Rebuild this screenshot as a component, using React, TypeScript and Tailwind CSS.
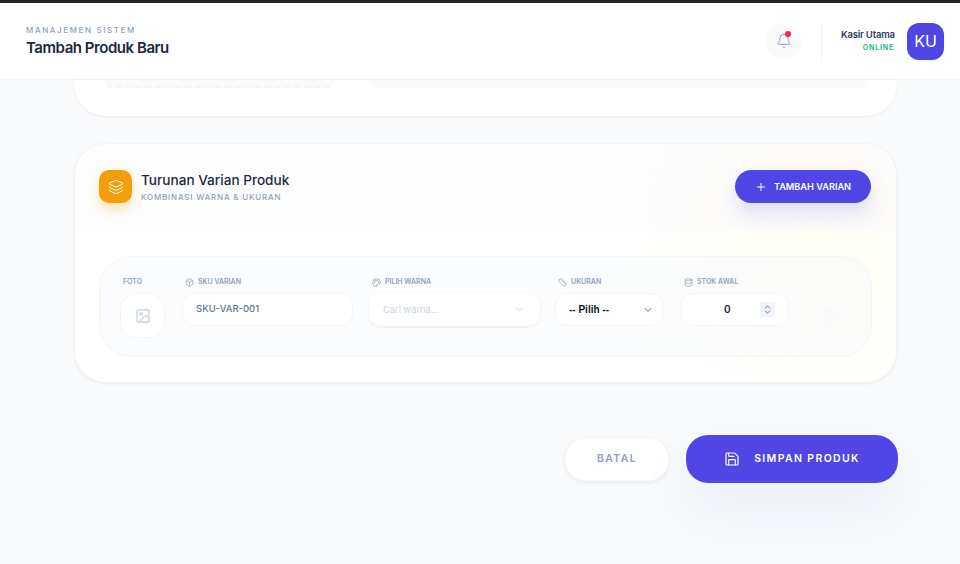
import { Bell, Box, ChevronDown, ChevronsUpDown, Database, Image, Layers, Palette, Plus, Ruler, Save, Trash2 } from 'lucide-react';

function FieldLabel({ icon, text }: { icon?: React.ReactNode; text: string }) {
  return (
    <div className="mb-[5px] flex h-[11px] items-center gap-[4px] text-[7px] font-semibold uppercase text-slate-400">
      {icon}
      <span>{text}</span>
    </div>
  );
}

export default function App() {
  return (
    <div className="flex h-[564px] w-[960px] flex-col overflow-hidden bg-[#f8fafc] font-['Inter',sans-serif]">
      <div className="h-[3px] bg-[#1f2228]" />
      <header className="flex h-[77px] shrink-0 items-center justify-between border-b border-slate-100 bg-white pl-[26px] pr-[16px]">
        <div>
          <p className="text-[8px] font-medium uppercase leading-[11px] tracking-[0.2em] text-slate-400">Manajemen Sistem</p>
          <h1 className="mt-[2px] text-[15px] font-semibold leading-[20px] tracking-[-0.03em] text-slate-800">Tambah Produk Baru</h1>
        </div>
        <div className="flex items-center">
          <div className="relative flex h-[35px] w-[35px] items-center justify-center rounded-2xl bg-slate-50 text-slate-400">
            <Bell size={16} strokeWidth={1.5} />
            <span className="absolute right-[10px] top-[7px] h-[6px] w-[6px] rounded-full bg-rose-500" />
          </div>
          <div className="ml-[20px] h-[38px] w-px bg-slate-100" />
          <div className="ml-[19px] w-[53px] text-right">
            <p className="-mt-px whitespace-nowrap text-[9.5px] font-semibold leading-[14px] tracking-[-0.02em] text-slate-700">Kasir Utama</p>
            <p className="text-[7px] font-semibold leading-[11px] tracking-[0.12em] text-emerald-500">ONLINE</p>
          </div>
          <div className="ml-[13px] flex h-[37px] w-[37px] items-center justify-center rounded-xl bg-[#4f46e5] text-[16px] text-white">KU</div>
        </div>
      </header>

      <main className="flex min-h-0 flex-1 flex-col pl-[74px] pr-[63px]">
        <section className="flex h-[36px] shrink-0 gap-[35px] rounded-b-[32px] bg-white px-[31px] shadow-[0_1px_3px_rgba(15,23,42,0.06)]">
          <div className="h-[8px] w-[230px] rounded-b-[20px] border-b-2 border-dashed border-slate-100 bg-slate-50" />
          <div className="h-[8px] flex-1 rounded-b-[20px] bg-slate-50" />
        </section>

        <section className="relative mt-[27px] h-[240px] shrink-0 overflow-hidden rounded-[32px] border border-slate-100 bg-white shadow-[0_1px_3px_rgba(15,23,42,0.06)]">
          <div className="absolute -right-[40px] -top-[20px] h-[240px] w-[240px] rounded-full bg-amber-50 opacity-60 blur-3xl" />
          <div className="relative flex h-[86px] items-center justify-between border-b border-slate-50 bg-slate-50/30 pl-[24px] pr-[25px]">
            <div className="flex items-center gap-[9px]">
              <div className="flex h-[33px] w-[33px] items-center justify-center rounded-[10px] bg-[#f59e0b] text-white shadow-[0_6px_12px_rgba(245,158,11,0.3)]">
                <Layers size={16} strokeWidth={1.5} />
              </div>
              <div className="mt-[1px]">
                <h2 className="text-[13.6px] font-medium leading-[18px] text-slate-800">Turunan Varian Produk</h2>
                <p className="mt-[3px] text-[8px] font-medium uppercase leading-[11px] tracking-[0.1em] text-slate-400">Kombinasi Warna &amp; Ukuran</p>
              </div>
            </div>
            <button className="flex h-[33px] w-[136px] items-center justify-center gap-[7px] rounded-full bg-[#4f46e5] text-[9.2px] font-semibold uppercase text-white shadow-[0_10px_20px_rgba(99,102,241,0.2)]">
              <Plus size={12} />
              Tambah Varian
            </button>
          </div>

          <div className="relative px-[24px] pt-[26px]">
            <div className="relative flex h-[101px] rounded-[32px] border border-slate-100 bg-slate-50/50 pl-[20px] pt-[20px]">
              <div className="w-[45px]">
                <div className="pl-[3px]">
                  <FieldLabel text="Foto" />
                </div>
                <div className="flex h-[45px] w-[45px] items-center justify-center rounded-2xl border border-slate-100 bg-white text-slate-300">
                  <Image size={16} strokeWidth={2} />
                </div>
              </div>
              <div className="ml-[17px] w-[171px]">
                <div className="pl-[3px]">
                  <FieldLabel icon={<Box size={9} />} text="SKU Varian" />
                </div>
                <div className="flex h-[33px] items-center rounded-xl border border-slate-100 bg-white pl-[13px] text-[9.5px] font-medium text-slate-500">SKU-VAR-001</div>
              </div>
              <div className="ml-[16px] w-[171px]">
                <div className="pl-[3px]">
                  <FieldLabel icon={<Palette size={9} />} text="Pilih Warna" />
                </div>
                <div className="flex h-[33px] items-center justify-between rounded-xl bg-white pl-[14px] pr-[15px] text-[9.3px] text-slate-300 shadow-[0_1px_3px_rgba(15,23,42,0.08)]">
                  Cari warna...
                  <ChevronDown size={11} />
                </div>
              </div>
              <div className="ml-[15px] w-[108px]">
                <div className="pl-[3px]">
                  <FieldLabel icon={<Ruler size={9} />} text="Ukuran" />
                </div>
                <div className="flex h-[33px] items-center justify-between rounded-xl border border-slate-100 bg-white pl-[13px] pr-[8px] font-['Liberation_Sans',sans-serif] text-[10px] font-bold text-slate-900">
                  -- Pilih --
                  <ChevronDown size={12} className="text-slate-500" />
                </div>
              </div>
              <div className="ml-[18px] w-[107px]">
                <div className="pl-[3px]">
                  <FieldLabel icon={<Database size={9} />} text="Stok Awal" />
                </div>
                <div className="flex h-[33px] items-center rounded-xl border border-slate-100 bg-white text-[10px] font-semibold text-slate-800">
                  <span className="ml-[42px] w-[7px]">0</span>
                  <span className="ml-[29px] flex h-[15px] w-[15px] items-center justify-center bg-slate-100 text-slate-500">
                    <ChevronsUpDown size={11} />
                  </span>
                </div>
              </div>
              <Trash2 size={14} className="absolute right-[35px] top-[51px] text-slate-100 opacity-40" />
            </div>
          </div>
        </section>

        <div className="-mr-px mt-[52px] flex items-center justify-end gap-[17px]">
          <button className="h-[43px] w-[104px] rounded-[20px] border border-slate-50 bg-white text-[10.5px] font-semibold uppercase tracking-[0.13em] text-slate-400 shadow-[0_1px_4px_rgba(15,23,42,0.08)]">Batal</button>
          <button className="flex h-[48px] w-[212px] items-center justify-center gap-[14px] rounded-[22px] bg-[#4f46e5] text-[10.5px] font-semibold uppercase tracking-[0.13em] text-white shadow-[0_25px_50px_rgba(99,102,241,0.08)]">
            <Save size={16} strokeWidth={1.75} />
            Simpan Produk
          </button>
        </div>
      </main>
    </div>
  );
}
